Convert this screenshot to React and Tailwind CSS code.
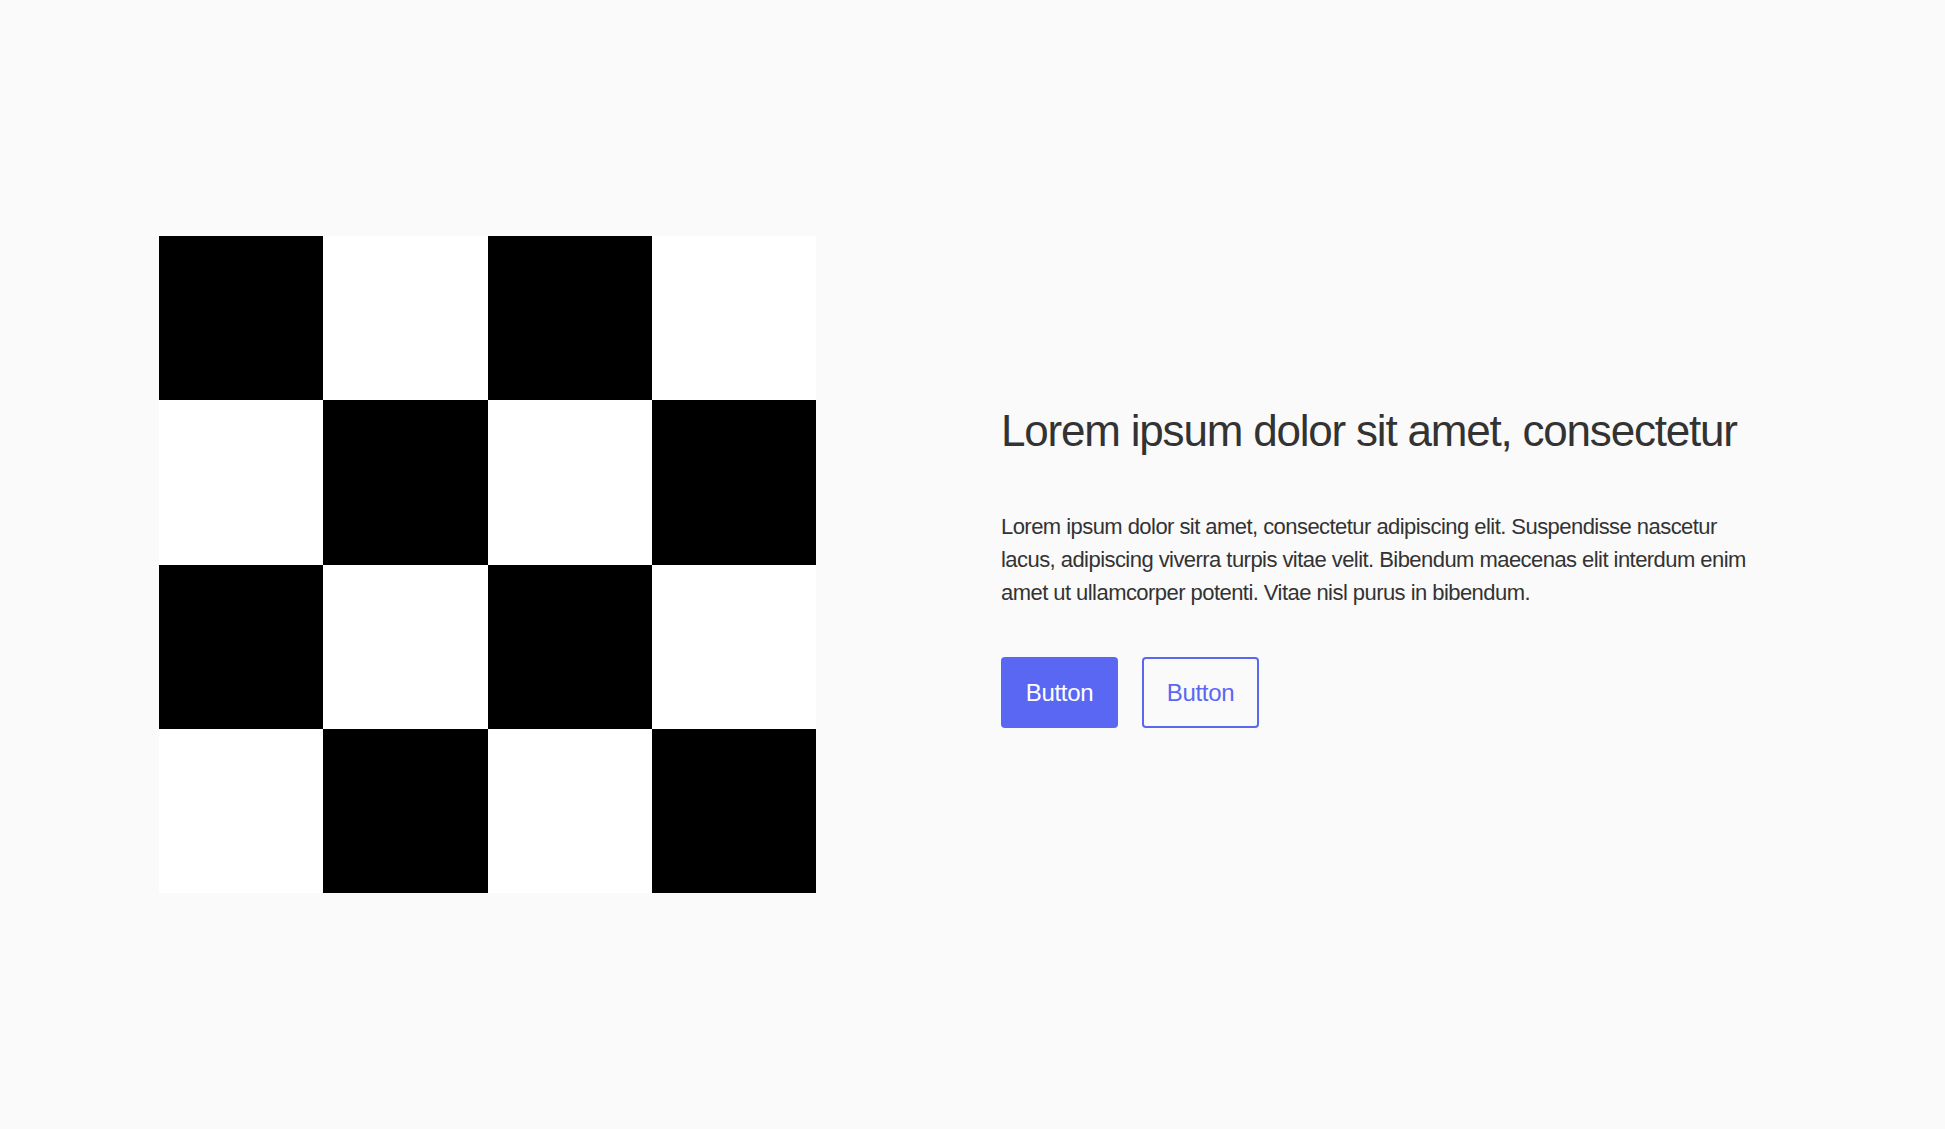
import React from "react";

export default function App() {
  const cells = [];
  for (let r = 0; r < 4; r++) {
    for (let c = 0; c < 4; c++) {
      const black = (r + c) % 2 === 0;
      cells.push(
        <div key={`${r}-${c}`} className={black ? "bg-black" : "bg-white"} />
      );
    }
  }
  return (
    <div className="min-h-screen w-full bg-[#fafafa] flex items-center pl-[159px] text-[#333333] font-['Liberation_Sans_Narrow','Liberation_Sans',sans-serif]">
      <div className="w-[657px] h-[657px] grid grid-cols-4 grid-rows-4 shrink-0">
        {cells}
      </div>
      <div className="ml-[185px] flex flex-col">
        <h1 className="text-[44px] leading-[60px] tracking-[-1.2px] whitespace-nowrap">
          Lorem ipsum dolor sit amet, consectetur
        </h1>
        <p className="mt-[49px] text-[22px] leading-[33px] tracking-[-0.55px] whitespace-nowrap">
          Lorem ipsum dolor sit amet, consectetur adipiscing elit. Suspendisse nascetur
          <br />
          lacus, adipiscing viverra turpis vitae velit. Bibendum maecenas elit interdum enim
          <br />
          amet ut ullamcorper potenti. Vitae nisl purus in bibendum.
        </p>
        <div className="mt-[48px] flex gap-[24px]">
          <button className="w-[117px] h-[71px] rounded-[4px] bg-[#5a67f2] text-white text-[24px] tracking-[-0.3px] flex items-center justify-center">
            Button
          </button>
          <button className="w-[117px] h-[71px] rounded-[4px] border-2 border-[#5a67f2] text-[#5a67f2] text-[24px] tracking-[-0.3px] flex items-center justify-center">
            Button
          </button>
        </div>
      </div>
    </div>
  );
}
